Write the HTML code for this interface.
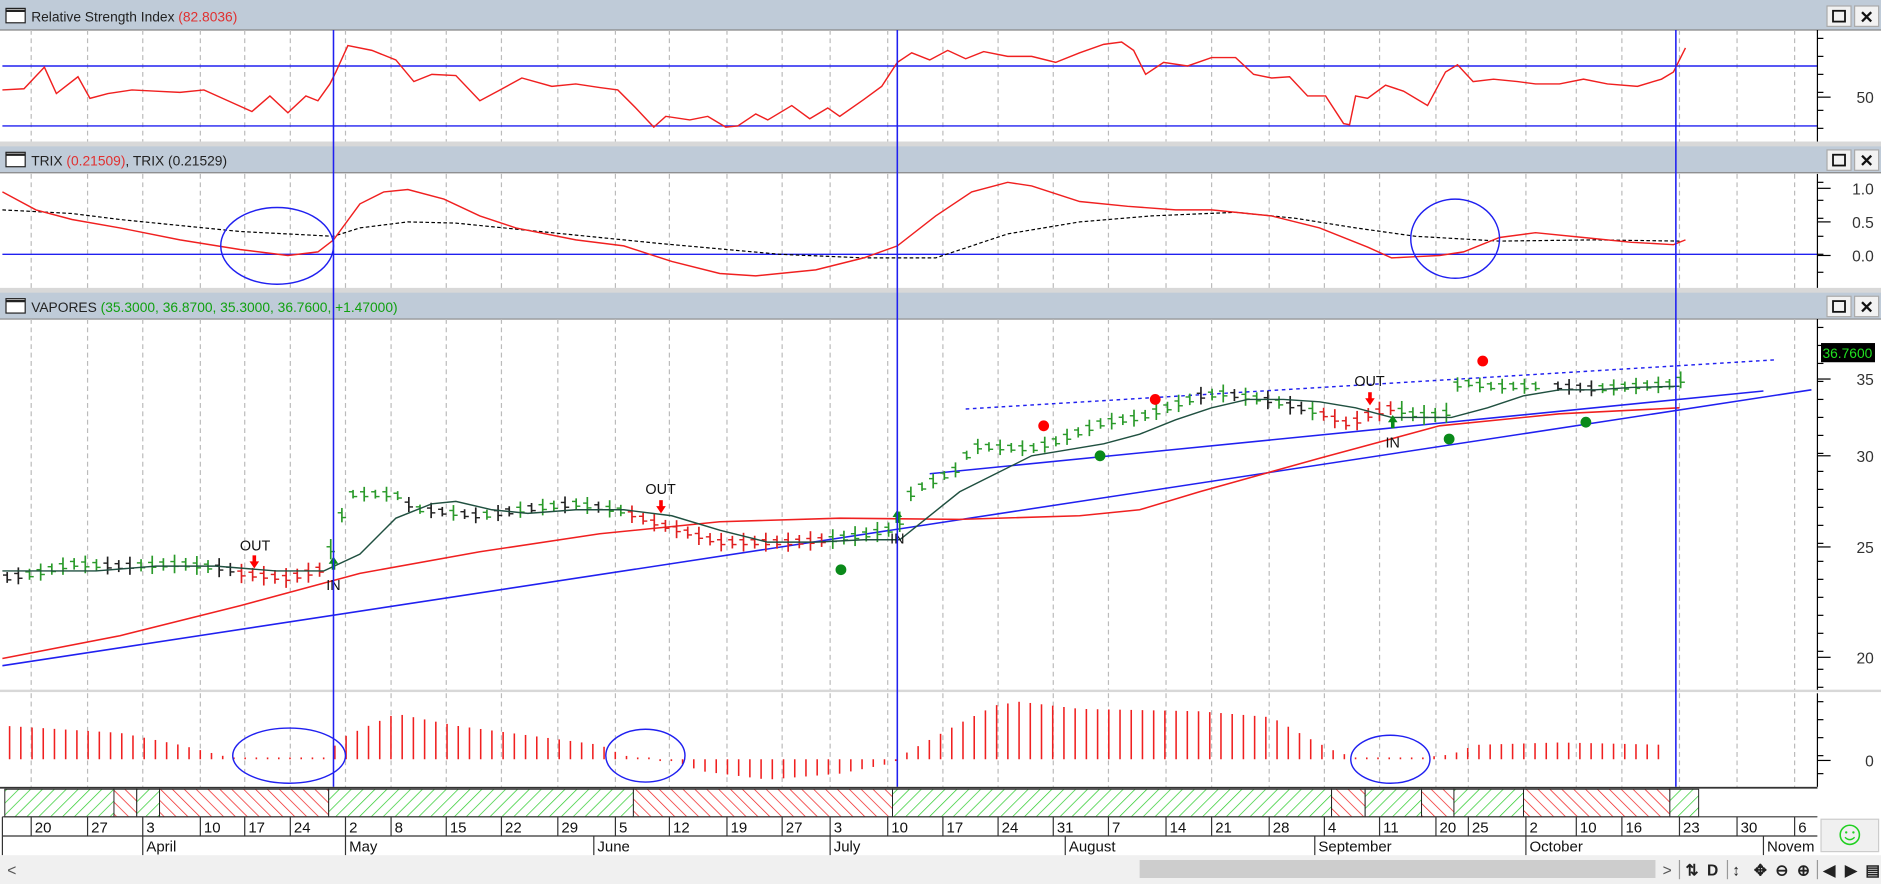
<!DOCTYPE html>
<html><head><meta charset="utf-8"><style>
html,body{margin:0;padding:0;background:#fff;overflow:hidden}
svg{display:block}
text{font-family:"Liberation Sans",Arial,sans-serif}
</style></head><body>
<svg id="s" width="1881" height="884" viewBox="0 0 1568 737" preserveAspectRatio="none" xmlns="http://www.w3.org/2000/svg">
<defs>
<pattern id="hg" width="7" height="7" patternUnits="userSpaceOnUse" patternTransform="rotate(45)"><rect width="7" height="7" fill="#fff"/><line x1="0" y1="0" x2="0" y2="7" stroke="#2ecc2e" stroke-width="1.2"/></pattern>
<pattern id="hr" width="7" height="7" patternUnits="userSpaceOnUse" patternTransform="rotate(-45)"><rect width="7" height="7" fill="#fff"/><line x1="0" y1="0" x2="0" y2="7" stroke="#f02020" stroke-width="1.2"/></pattern>
</defs>
<rect width="1568" height="737" fill="#fff"/>
<g id="hdrs"></g>
<g id="grid"></g>
<line x1="2" y1="55" x2="1515" y2="55" stroke="#2020f0" stroke-width="1.2"/>
<line x1="2" y1="105" x2="1515" y2="105" stroke="#2020f0" stroke-width="1.2"/>
<polyline fill="none" stroke="#f02020" stroke-width="1.2" points="2,75 20,74 37,56 47,78 65,64 75,82 90,78 110,75 130,76 150,77 170,75 190,84 210,93 225,80 240,94 255,80 265,84 275,70 280,60 290,38 310,42 330,50 345,68 360,62 380,63 400,84 415,76 435,65 460,72 480,70 500,73 515,75 530,90 545,106 555,97 575,100 590,97 605,106 615,105 630,95 640,100 660,88 675,99 690,90 700,97 720,83 735,72 748,52 760,44 775,50 790,42 805,49 820,43 840,47 860,47 880,52 900,44 920,37 935,35 945,42 955,62 970,52 990,55 1010,48 1030,48 1045,62 1060,65 1075,64 1090,80 1105,80 1120,103 1125,104 1130,80 1140,82 1155,71 1170,76 1190,88 1205,60 1215,54 1228,68 1245,66 1265,68 1280,70 1300,70 1320,66 1340,70 1365,72 1385,66 1395,60 1405,40"/>
<line x1="2" y1="212" x2="1515" y2="212" stroke="#2020f0" stroke-width="1.2"/>
<polyline fill="none" stroke="#000" stroke-width="1" stroke-dasharray="3,2" points="2,175 60,178 100,183 200,193 278,197 300,190 340,185 380,186 450,193 550,203 650,212 720,215 780,215 840,195 900,185 960,180 1030,177 1080,182 1130,190 1180,197 1250,201 1330,200 1400,201"/>
<polyline fill="none" stroke="#f02020" stroke-width="1.2" points="2,160 30,175 60,183 100,190 150,200 200,208 240,213 265,210 278,200 300,170 320,160 340,158 370,166 400,180 430,190 480,200 520,205 560,218 600,228 630,230 680,225 720,215 748,205 780,180 810,160 840,152 860,155 900,168 940,172 980,175 1010,175 1060,180 1100,190 1140,206 1160,215 1180,214 1200,213 1220,210 1250,198 1280,194 1320,198 1360,202 1395,204 1405,200"/>
<ellipse cx="231" cy="205" rx="47" ry="32" fill="none" stroke="#2020f0" stroke-width="1.2"/>
<ellipse cx="1213" cy="199" rx="37" ry="33" fill="none" stroke="#2020f0" stroke-width="1.2"/>
<line x1="2" y1="555" x2="1510" y2="325" stroke="#2020f0" stroke-width="1.3"/>
<line x1="775" y1="395" x2="1470" y2="326" stroke="#2020f0" stroke-width="1.3"/>
<line x1="805" y1="341" x2="1480" y2="300" stroke="#2020f0" stroke-width="1.2" stroke-dasharray="3,3"/>
<polyline fill="none" stroke="#f02020" stroke-width="1.3" points="2,549 100,530 200,505 300,478 400,460 500,445 600,435 700,432 800,433 900,430 950,425 1000,410 1100,382 1200,355 1300,345 1400,340"/>
<g id="bars"></g>
<polyline fill="none" stroke="#205040" stroke-width="1.2" points="2,476 40,476 80,476 130,472 180,472 230,476 270,476 300,462 330,432 360,420 380,418 410,425 440,428 480,425 520,425 560,430 600,442 640,452 680,452 720,450 750,450 775,430 800,410 830,395 860,380 890,375 920,370 950,362 980,350 1010,340 1040,333 1070,333 1100,335 1130,340 1160,348 1190,348 1210,348 1240,340 1270,330 1300,325 1330,325 1360,323 1400,322"/>
<g fill="#f00"><circle cx="870" cy="355" r="4.5"/><circle cx="963" cy="333" r="4.5"/><circle cx="1236" cy="301" r="4.5"/></g>
<g fill="#0a8a1a"><circle cx="701" cy="475" r="4.5"/><circle cx="917" cy="380" r="4.5"/><circle cx="1208" cy="366" r="4.5"/><circle cx="1322" cy="352" r="4.5"/></g>
<g font-size="12" fill="#111">
<text x="200" y="459">OUT</text><text x="272" y="492">IN</text>
<text x="538" y="412">OUT</text><text x="742" y="453">IN</text>
<text x="1129" y="322">OUT</text><text x="1155" y="373">IN</text>
</g>
<g id="arrows"></g>
<g id="hist"></g>
<ellipse cx="241" cy="630" rx="47" ry="23" fill="none" stroke="#2020f0" stroke-width="1.2"/>
<ellipse cx="538" cy="630" rx="33" ry="22" fill="none" stroke="#2020f0" stroke-width="1.2"/>
<ellipse cx="1159" cy="633" rx="33" ry="20" fill="none" stroke="#2020f0" stroke-width="1.2"/>
<g stroke="#2020f0" stroke-width="1.3"><line x1="278" y1="25" x2="278" y2="656"/><line x1="748" y1="25" x2="748" y2="656"/><line x1="1397" y1="25" x2="1397" y2="656"/></g>
<g id="axes"></g>
<rect x="1518" y="286" width="45" height="16" fill="#000"/>
<text x="1540" y="298.5" font-size="11.5" fill="#20e020" text-anchor="middle">36.7600</text>
<g id="band"></g>
<g id="dates"></g>
<rect x="0" y="713" width="1568" height="24" fill="#f0f0f0"/>
<rect x="950" y="717" width="430" height="15" fill="#cdcdcd"/>
<text x="6" y="730" font-size="13" fill="#555">&lt;</text>
<text x="1386" y="730" font-size="13" fill="#555">&gt;</text>
<g font-size="13" fill="#222" font-weight="bold">
<line x1="1400" y1="717" x2="1400" y2="733" stroke="#999"/>
<text x="1405" y="730">⇅</text><text x="1423" y="730">D</text>
<line x1="1440" y1="717" x2="1440" y2="733" stroke="#999"/>
<text x="1444" y="730">↕</text><text x="1462" y="730">✥</text><text x="1480" y="730">⊖</text><text x="1498" y="730">⊕</text>
<line x1="1515" y1="717" x2="1515" y2="733" stroke="#999"/>
<text x="1520" y="730">◀</text><text x="1538" y="730">▶</text><text x="1555" y="730">▤</text>
</g>
<rect x="1518" y="683" width="48" height="27" fill="#f0f0f0" stroke="#ccc"/>
<circle cx="1542" cy="696" r="8" fill="none" stroke="#20d020" stroke-width="1.3"/>
<circle cx="1539" cy="694" r="1" fill="#20d020"/><circle cx="1545" cy="694" r="1" fill="#20d020"/>
<path d="M1538 698 Q1542 702 1546 698" fill="none" stroke="#20d020" stroke-width="1.2"/>
</svg>
<script>
const NS="http://www.w3.org/2000/svg";
function el(p,t,a,txt){const e=document.createElementNS(NS,t);for(const k in a)e.setAttribute(k,a[k]);if(txt!==undefined)e.textContent=txt;p.appendChild(e);return e;}
function $(i){return document.getElementById(i);}
function interp(pts,x){for(let i=0;i<pts.length-1;i++){if(x<=pts[i+1][0]){const [x0,y0]=pts[i],[x1,y1]=pts[i+1];return y0+(y1-y0)*(x-x0)/(x1-x0);}}return pts[pts.length-1][1];}
const H=$("hdrs");
const heads=[[2,24,"Relative Strength Index",[["(82.8036)","#e03030"]]],[122,143,"TRIX",[["(0.21509)","#e03030"],[", TRIX (0.21529)","#222"]]],[244,265,"VAPORES",[["(35.3000, 36.8700, 35.3000, 36.7600, +1.47000)","#10a010"]]]];
heads.forEach(([y0,y1,name,parts])=>{
 el(H,"rect",{x:0,y:y0-2,width:1568,height:y1-y0+3,fill:"#bfcbd8"});
 el(H,"line",{x1:0,y1:y1+1,x2:1568,y2:y1+1,stroke:"#888"});
 el(H,"rect",{x:5,y:y0+5,width:16,height:12,fill:"#fff",stroke:"#222"});
 el(H,"line",{x1:5,y1:y0+7,x2:21,y2:y0+7,stroke:"#222","stroke-width":2});
 const t=el(H,"text",{x:26,y:y0+16,"font-size":11.5,fill:"#222"});
 el(t,"tspan",{},name+" ");parts.forEach(([s,c])=>el(t,"tspan",{fill:c},s));
 [1523,1546].forEach((bx,i)=>{el(H,"rect",{x:bx,y:y0+3,width:20,height:17,fill:"#f2f2f2",stroke:"#aaa"});
  if(i==0)el(H,"rect",{x:bx+5,y:y0+7,width:10,height:9,fill:"none",stroke:"#111","stroke-width":1.5});
  else el(H,"text",{x:bx+10,y:y0+17,"font-size":14,"font-weight":"bold","text-anchor":"middle",fill:"#111"},"✕");});
});
[[118,122],[240,244],[575,577]].forEach(([a,b])=>el(H,"rect",{x:0,y:a,width:1568,height:b-a,fill:"#d8d8d8"}));
const ticks=[[26,"20"],[73,"27"],[119,"3"],[167,"10"],[204,"17"],[242,"24"],[288,"2"],[326,"8"],[372,"15"],[418,"22"],[465,"29"],[513,"5"],[558,"12"],[606,"19"],[652,"27"],[692,"3"],[740,"10"],[786,"17"],[832,"24"],[878,"31"],[924,"7"],[972,"14"],[1010,"21"],[1058,"28"],[1104,"4"],[1150,"11"],[1197,"20"],[1224,"25"],[1272,"2"],[1314,"10"],[1352,"16"],[1400,"23"],[1448,"30"],[1496,"6"]];
const G=$("grid");
ticks.forEach(([x])=>{[[25,118],[145,240],[266,575],[578,656]].forEach(([a,b])=>el(G,"line",{x1:x,y1:a,x2:x,y2:b,stroke:"#bbb","stroke-dasharray":"4,3"}));});
const A=$("axes");
[[25,118],[145,240],[266,575],[578,656]].forEach(([a,b])=>{el(A,"line",{x1:1515,y1:a,x2:1515,y2:b,stroke:"#000"});for(let y=a+7;y<b;y+=15)el(A,"line",{x1:1515,y1:y,x2:1520,y2:y,stroke:"#000"});});
[["50",81],["1.0",157],["0.5",185],["0.0",213],["35",316],["30",380],["25",456],["20",548],["0",634]].forEach(([s,y])=>{el(A,"line",{x1:1515,y1:y,x2:1526,y2:y,stroke:"#000"});el(A,"text",{x:1562,y:y+5,"font-size":13,fill:"#333","text-anchor":"end"},s);});
const path=[[2,482],[30,478],[60,470],[100,472],[150,470],[190,474],[200,478],[240,482],[270,474],[282,440],[290,412],[330,412],[345,424],[400,430],[440,424],[480,420],[520,426],[540,434],[600,452],[660,452],[690,450],[720,446],[748,440],[760,410],[780,400],[800,390],[810,372],[860,374],[880,368],[920,352],[950,348],[1000,330],[1020,328],[1060,334],[1100,344],[1125,354],[1140,346],[1160,340],[1180,346],[1205,346],[1216,318],[1240,322],[1300,322],[1330,324],[1360,322],[1400,320],[1406,300]];
const col=x=>{if(x<200)return x%3?"#2a9a2a":"#222";if(x<274)return "#e02020";if(x<330)return "#2a9a2a";if(x<520)return x%2?"#222":"#2a9a2a";if(x<690)return "#e02020";if(x<1000)return "#2a9a2a";if(x<1100)return x%2?"#222":"#2a9a2a";if(x<1160)return "#e02020";if(x<1290)return "#2a9a2a";if(x<1330)return "#222";return "#2a9a2a";};
const B=$("bars");
for(let x=6;x<1408;x+=9.3){if(x>1285&&x<1292)continue;const y=interp(path,x);const h=7+((x*7)%10);const c=col(Math.round(x));el(B,"line",{x1:x,y1:y-h/2,x2:x,y2:y+h/2,stroke:c,"stroke-width":1.4});el(B,"line",{x1:x-3.5,y1:y-2,x2:x,y2:y-2,stroke:c,"stroke-width":1.2});el(B,"line",{x1:x,y1:y+2,x2:x+3.5,y2:y+2,stroke:c,"stroke-width":1.2});}
const AR=$("arrows");
[[212,463],[551,417],[1142,327]].forEach(([x,y])=>{el(AR,"rect",{x:x-1.5,y:y,width:3,height:6,fill:"#f00"});el(AR,"path",{d:`M${x-4} ${y+5}L${x+4} ${y+5}L${x} ${y+11}Z`,fill:"#f00"});});
[[278,464],[748,425],[1161,346]].forEach(([x,y])=>{el(AR,"path",{d:`M${x-4} ${y+6}L${x+4} ${y+6}L${x} ${y}Z`,fill:"#0a8a1a"});el(AR,"rect",{x:x-1.5,y:y+5,width:3,height:6,fill:"#0a8a1a"});});
const hv=[[2,28],[100,22],[150,12],[185,3],[195,1],[270,1],[285,18],[330,38],[380,28],[440,20],[500,12],[520,3],[560,-1],[585,-10],[640,-17],[700,-12],[740,-4],[760,8],[800,30],[830,45],[850,48],[900,42],[1000,40],[1060,35],[1090,18],[1110,8],[1130,1],[1190,2],[1210,4],[1230,12],[1300,14],[1390,12],[1410,15]];
const HI=$("hist");
for(let x=8;x<1408;x+=9.35){if(x>1388&&x<1403)continue;let v=interp(hv,x);if(Math.abs(v)<2)v=v<0?-1.5:1.5;el(HI,"line",{x1:x,y1:633,x2:x,y2:633-v,stroke:"#f02020","stroke-width":1.3});}
const BD=$("band");
el(BD,"rect",{x:0,y:656,width:1515,height:1.5,fill:"#333"});
[[4,95,"hg"],[95,114,"hr"],[114,133,"hg"],[133,274,"hr"],[274,528,"hg"],[528,744,"hr"],[744,1110,"hg"],[1110,1138,"hr"],[1138,1185,"hg"],[1185,1212,"hr"],[1212,1270,"hg"],[1270,1392,"hr"],[1392,1416,"hg"]].forEach(([a,b,p])=>el(BD,"rect",{x:a,y:658,width:b-a,height:23,fill:`url(#${p})`,stroke:"#222","stroke-width":0.8}));
const D=$("dates");
el(D,"line",{x1:2,y1:681,x2:1515,y2:681,stroke:"#333"});
el(D,"line",{x1:2,y1:697,x2:1515,y2:697,stroke:"#333"});
el(D,"line",{x1:2,y1:681,x2:2,y2:713,stroke:"#333"});
ticks.forEach(([x,s])=>{el(D,"line",{x1:x,y1:681,x2:x,y2:697,stroke:"#333"});el(D,"text",{x:x+3,y:694,"font-size":12.5,fill:"#111"},s);});
[[119,"April"],[288,"May"],[495,"June"],[692,"July"],[888,"August"],[1096,"September"],[1272,"October"],[1470,"Novem"]].forEach(([x,s])=>{el(D,"line",{x1:x,y1:697,x2:x,y2:713,stroke:"#333"});el(D,"text",{x:x+3,y:710,"font-size":12.5,fill:"#111"},s);});
el(D,"rect",{x:1515,y:681,width:53,height:32,fill:"#fff"});
</script>
</body></html>
